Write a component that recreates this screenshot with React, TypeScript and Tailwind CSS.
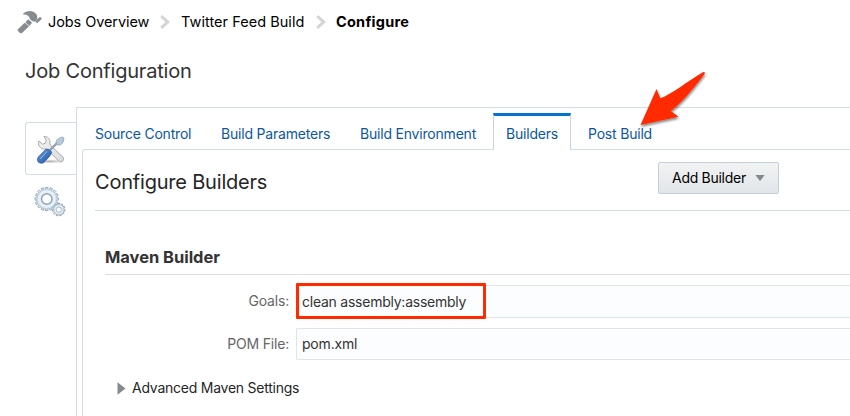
import React from "react";

function Hammer() {
  return (
    <svg className="h-[24px] w-[25px] shrink-0" viewBox="0 0 75 72">
      <g fill="#868b90">
        <path d="M17 13C22 5 31 3 41 3C49 4 55 8 60 15L61 26L54 35L46 33C40 30 38 25 36 20C31 15 26 13 17 13Z" />
        <path d="M55 34L69 20L75 26L60 40Z" />
        <path d="M34 28L45 38L37 48L25 37Z" />
        <path d="M23 38L36 49L15 69Q12 71 9 69L3 63Q1 61 3 58Z" />
      </g>
    </svg>
  );
}

function Chevron() {
  return (
    <svg className="h-[14px] w-[10px] shrink-0" viewBox="0 0 10 14">
      <path d="M1.2 1.2L7.8 7L1.2 12.8" fill="none" stroke="#d3d5d7" strokeWidth="3" />
    </svg>
  );
}

function Tools() {
  return (
    <svg className="mr-[3px] h-[30px] w-[30px]" viewBox="0 -0.6 30 30">
      <defs>
        <linearGradient id="steel" x1="0" y1="0" x2="1" y2="1">
          <stop offset="0" stopColor="#f2f2f2" />
          <stop offset="1" stopColor="#dcdddf" />
        </linearGradient>
        <linearGradient id="handle" x1="0" y1="0" x2="1" y2="1">
          <stop offset="0" stopColor="#7ba3da" />
          <stop offset=".5" stopColor="#4277c0" />
          <stop offset="1" stopColor="#234f95" />
        </linearGradient>
        <radialGradient id="ground">
          <stop offset="0" stopColor="#888" stopOpacity=".7" />
          <stop offset="1" stopColor="#999" stopOpacity="0" />
        </radialGradient>
      </defs>
      <ellipse cx="15" cy="26.8" rx="14" ry="2.2" fill="url(#ground)" />
      <path d="M9 1.8C13 1.6 15.6 4.8 14.8 9L16 11.2L28 22.6C29.8 25.2 27.4 28 24.2 27L12 14.4C8.4 15.2 4 13.4 3.4 9.2L3.8 6.4L7.6 9.6L10.4 8.6L11.2 5.4Z" fill="url(#steel)" stroke="#a6a8aa" strokeWidth="1" />
      <circle cx="25.6" cy="24.8" r=".9" fill="#fff" stroke="#aaa" strokeWidth=".4" />
      <path d="M15 15.4L22.2 8.2" stroke="#8fa2b3" strokeWidth="2.4" />
      <path d="M21 6.5Q23.6 3 27.8 2.4L29 3.6Q28.8 8.6 25.4 10.3L22 10.3Z" fill="#b7c9da" stroke="#8ea3b7" strokeWidth=".8" />
      <path d="M10.9 14.6Q14.6 14 16.8 17.4Q16.2 20.5 11.8 24.8L8.6 28.2Q6 29.4 3.4 27.6Q1.4 25.6 3.2 22.5Z" fill="url(#handle)" stroke="#2b569c" strokeWidth=".7" />
      <path d="M11.6 17.2L5.4 24.2" stroke="#94b8e8" strokeWidth="1" strokeLinecap="round" />
    </svg>
  );
}

function Gear({ cx, cy, r, teeth, width }: { cx: number; cy: number; r: number; teeth: number; width: number }) {
  return (
    <g>
      {Array.from({ length: teeth }, (_, i) => (
        <rect
          key={i}
          x={cx - width / 2}
          y={cy - r - width * 0.75}
          width={width}
          height={width * 1.4}
          fill="#dbe7f1"
          stroke="#8399ac"
          strokeWidth=".7"
          transform={`rotate(${(i * 360) / teeth} ${cx} ${cy})`}
        />
      ))}
      <circle cx={cx} cy={cy} r={r} fill="#d6e4ef" stroke="#a9bccb" strokeWidth=".5" />
      <circle cx={cx} cy={cy} r={r * 0.76} fill="none" stroke="#e9f2f8" strokeWidth={r * 0.2} />
      <circle cx={cx} cy={cy} r={r * 0.52} fill="#fff" stroke="#8496a6" strokeWidth={r * 0.12} />
    </g>
  );
}

function Gears() {
  return (
    <svg className="h-[32px] w-[32px]" viewBox="0 0 32 32">
      <Gear cx={12.8} cy={13} r={10} teeth={16} width={2.3} />
      <Gear cx={24.8} cy={23.6} r={5} teeth={11} width={1.7} />
    </svg>
  );
}

function Arrow() {
  return (
    <svg className="absolute left-[636px] top-[66px] h-[66px] w-[76px]" viewBox="636 66 76 66">
      <defs>
        <filter id="soft" x="-20%" y="-20%" width="140%" height="150%">
          <feDropShadow dx="0.6" dy="2" stdDeviation="1.2" floodOpacity=".45" />
        </filter>
      </defs>
      <path
        d="M640.5 125L656.5 89L660.4 98.2C671 94.5 688 81 702.8 72.2Q704.8 71.4 704.9 73.4C697 84 682 103 670.8 111L678.6 116.7Z"
        fill="#ff2a00"
        filter="url(#soft)"
      />
    </svg>
  );
}

export default function App() {
  return (
    <div className="relative flex h-[416px] w-[850px] flex-col overflow-hidden bg-white font-['Inter','Liberation_Sans',sans-serif] text-[14px] leading-[20px] tracking-[-0.2px] whitespace-nowrap text-black">
      <header className="h-[107px] shrink-0">
        <nav className="flex h-[43px] items-center pl-[17px] text-[14.5px]">
          <Hammer />
          <span className="ml-[6px] w-[112px] tracking-[-0.08px]">Jobs Overview</span>
          <Chevron />
          <span className="ml-[11px] w-[135px] tracking-[0.04px]">Twitter Feed Build</span>
          <Chevron />
          <span className="ml-[10px] font-bold tracking-[0.25px]">Configure</span>
        </nav>
        <h1 className="mt-[14px] pl-[25px] text-[20px] leading-[28px] text-[#333]">Job Configuration</h1>
      </header>
      <div className="flex min-h-0 flex-1">
        <aside className="z-10 -mr-px w-[77px] shrink-0 pt-[15px] pl-[25px]">
          <div className="flex h-[53px] w-[51px] items-center justify-center rounded-l-[3px] border border-r-0 border-[#d3dde6] bg-white">
            <Tools />
          </div>
          <div className="mt-[11px] ml-[9px]">
            <Gears />
          </div>
        </aside>
        <main className="flex min-w-0 flex-1 flex-col border-t border-l border-[#d3dde6] pl-[5px]">
          <div className="z-10 -mb-px flex h-[42px] items-end text-[#0b579f]">
            <span className="h-[26px] w-[126px] pl-[13px]">Source Control</span>
            <span className="h-[26px] w-[139px] pl-[13px]">Build Parameters</span>
            <span className="h-[26px] w-[146px] pl-[13px]">Build Environment</span>
            <span className="h-[37px] w-[78px] border-x border-t-[3px] border-[#c9d3dd] border-t-[#0572ce] bg-white pt-[8px] pl-[12px]">Builders</span>
            <span className="h-[26px] pl-[17px]">Post Build</span>
          </div>
          <section className="flex-1 rounded-tl-[3px] border-t border-l border-[#d3dde6] pl-[12px]">
            <div className="flex h-[61px] border-b border-[#d3dde6] pt-[12px]">
              <h2 className="mt-[6px] w-[563px] text-[20px] leading-[28px] text-[#252525]">Configure Builders</h2>
              <button className="flex h-[32px] w-[121px] items-center rounded-[2px] border border-[#c4ced7] bg-linear-to-b from-[#f1f3f4] to-[#e2e6e9] pl-[13px]">
                <span className="w-[83px] text-left tracking-[-0.28px]">Add Builder</span>
                <svg className="h-[6px] w-[10px]" viewBox="0 0 10 6"><path d="M.3 0H9.7L5 6Z" fill="#84898e" /></svg>
              </button>
            </div>
            <div className="pt-[32px] pl-[10px]">
              <h3 className="h-[32px] border-b border-[#dadfe4] pt-[3px] text-[16.5px] leading-[22px] font-bold tracking-[-0.03px] text-[#333]">Maven Builder</h3>
              <div className="mt-[10px] flex">
                <label className="w-[184px] pt-[6px] text-right text-[#666]">Goals:</label>
                <div className="relative ml-[7px] h-[33px] flex-1 rounded-l-[2px] border border-r-0 border-[#dfe4e7] bg-[#fcfdfe] pt-[6px] pl-[5px] text-[#333]">
                  <span className="tracking-[-0.24px]">clean assembly:assembly</span>
                  <div className="absolute top-[-3px] left-[-1px] h-[36px] w-[190px] rounded-[1px] border-[3px] border-[#ff2a00]" />
                </div>
              </div>
              <div className="mt-[10px] flex">
                <label className="w-[184px] pt-[6px] text-right text-[#666]">POM File:</label>
                <div className="ml-[7px] h-[32px] flex-1 rounded-l-[2px] border border-r-0 border-[#dfe4e7] bg-[#fcfdfe] pt-[5px] pl-[5px] text-[#333]">pom.xml</div>
              </div>
              <div className="mt-[18px] flex items-center pl-[12px] text-[#252525]">
                <svg className="mr-[6px] h-[13px] w-[9px]" viewBox="0 0 9 13"><path d="M.5 .3L8.5 6.5L.5 12.7Z" fill="#84898e" /></svg>
                <span className="tracking-[-0.24px]">Advanced Maven Settings</span>
              </div>
            </div>
          </section>
        </main>
      </div>
      <Arrow />
    </div>
  );
}
